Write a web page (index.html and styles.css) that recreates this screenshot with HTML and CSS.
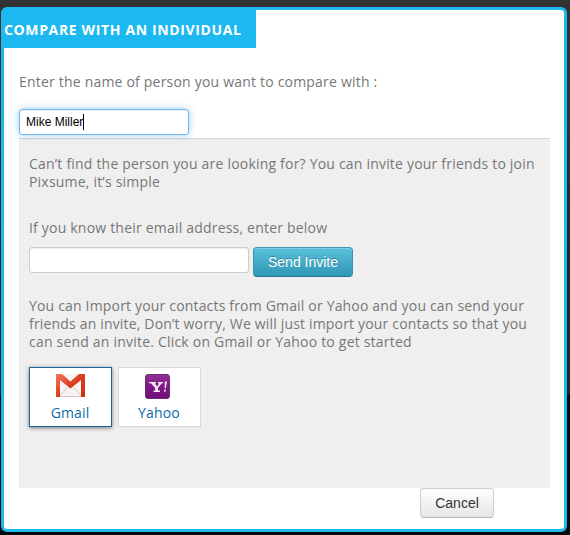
FILE: index.html
```html
<!DOCTYPE html>
<html lang="en">
<head>
<meta charset="utf-8">
<title>Compare with an individual</title>
<link rel="stylesheet" href="styles.css">
</head>
<body>
<main class="dialog">
  <h1 class="title">COMPARE WITH AN INDIVIDUAL</h1>
  <div class="body">
    <p class="prompt">Enter the name of person you want to compare with :</p>
    <div class="field field-name">Mike Miller<span class="caret"></span></div>
    <section class="panel">
      <p class="intro">Can’t find the person you are looking for? You can invite your friends to join<br>Pixsume, it’s simple</p>
      <p class="email-label">If you know their email address, enter below</p>
      <div class="invite">
        <input class="field field-email" type="text" aria-label="Email address">
        <button class="btn btn-info" type="button">Send Invite</button>
      </div>
      <p class="import">You can Import your contacts from Gmail or Yahoo and you can send your<br>friends an invite, Don’t worry, We will just import your contacts so that you<br><span class="import-end">can send an invite. Click on Gmail or Yahoo to get started</span></p>
      <div class="providers">
        <a class="provider active">
          <svg class="icon icon-gmail" width="30" height="26" viewBox="0 0 30 26">
            <defs><linearGradient id="red" x1="0" y1="0" x2="1" y2="1"><stop offset="0" stop-color="#f4775a"/><stop offset=".5" stop-color="#dc3c20"/><stop offset="1" stop-color="#d0300f"/></linearGradient></defs>
            <path d="M1 1H30V24H1z" fill="#f8f3f2"/>
            <path d="M5 22.500L12.500 14.500M26 22.500L18.500 14.500M5 23.500H26" fill="none" stroke="#cfc0bc" stroke-width=".9"/>
            <path d="M1 1H7L15.500 8.500L24 1H30V24H26V7L15.500 15.500L5 7V24H1z" fill="url(#red)"/>
          </svg>
          <span>Gmail</span>
        </a>
        <a class="provider">
          <svg class="icon" width="26" height="26" viewBox="0 0 26 26">
            <defs><linearGradient id="purple" x1="0" y1="0" x2="0" y2="1"><stop offset="0" stop-color="#943299"/><stop offset=".45" stop-color="#7f1b85"/><stop offset="1" stop-color="#720b77"/></linearGradient></defs>
            <rect x=".5" y="1.500" width="24" height="24" rx="2.500" fill="url(#purple)" stroke="#68306c"/>
            <path d="M4 9H11V10.300H9.800L12 13.500L14.300 10.500H13V9H18V10.300H16.700L13 15V17.600H15V19H8.500V17.600H10.200V15L6 10.300H4z" fill="#f6eaf7"/>
            <path d="M19.800 8.500H22L20.800 15.500H19.700zM19 16.800H20.800V18.600H19z" fill="#f6eaf7"/>
          </svg>
          <span>Yahoo</span>
        </a>
      </div>
    </section>
    <button class="btn btn-cancel" type="button">Cancel</button>
  </div>
</main>
</body>
</html>
```
FILE: styles.css
```css
* { box-sizing: border-box; }
html { height: 100%; background: linear-gradient(#333 0, #333 18%, #222 50%, #222 73.500%, #050809 74%, #050809 100%); }
body { margin: 0; height: 535px; padding: 7px 2px 3px 1px; overflow: hidden; font: 14px/18px "Open Sans", sans-serif; color: #777; }
p, h1 { margin: 0; white-space: nowrap; }
p { letter-spacing: .2px; }
.dialog { width: 566px; height: 525px; border: 3px solid #1cb8f0; border-radius: 6px; background: #fff; }
.title { width: 252px; height: 38px; background: #1cb8f0; color: #fff; font-size: 14px; line-height: 40px; font-weight: 700; letter-spacing: .64px; }
.body { display: flex; flex-direction: column; padding: 25px 14px 0 15px; }
.prompt { height: 18px; }
.field { border: 1px solid #ccc; border-radius: 3px; background: #fff; height: 26px; box-shadow: inset 0 1px 1px rgba(0,0,0,.075); }
.field-name { display: flex; align-items: center; width: 170px; margin-top: 18px; padding-left: 6px; border-color: #70b9ef; box-shadow: inset 0 1px 1px rgba(0,0,0,.075), 0 0 7px rgba(82,168,236,.6); color: #000; font: 12px/16px "Liberation Sans", sans-serif; z-index: 1; }
.caret { width: 1px; height: 16px; background: #000; }
.panel { height: 350px; margin-top: 3px; padding: 16px 10px 0; border-top: 1px solid #d3d3d3; background: #efefef; }
.email-label { margin-top: 28px; }
.invite { display: flex; align-items: flex-start; gap: 4px; margin-top: 10px; }
.field-email { width: 220px; padding: 0 6px; }
.btn { height: 30px; padding: 0; border-radius: 4px; font: 14px/18px "Liberation Sans", sans-serif; }
.btn-info { width: 100px; border: 1px solid #3b93ae; border-bottom-color: #267993; background: linear-gradient(#5bc0de, #2f96b4); color: #fff; text-shadow: 0 -1px 0 rgba(0,0,0,.25); box-shadow: inset 0 1px 0 rgba(255,255,255,.2); }
.import { margin-top: 20px; letter-spacing: .175px; }
.import-end { letter-spacing: .205px; }
.providers { display: flex; gap: 6px; margin-top: 16px; }
.provider { display: flex; flex-direction: column; align-items: center; width: 83px; height: 60px; padding-top: 5px; border: 1px solid #d8d8d8; background: #fff; color: #0b6ba5; }
.provider.active { border-color: #1b659d; box-shadow: 0 1px 4px rgba(0,0,0,.5); }
.provider span { margin: 5px 1px 0 0; letter-spacing: .15px; }
.icon { display: block; margin-right: 3px; }
.icon-gmail { margin-right: 1px; }
.btn-cancel { align-self: flex-end; width: 74px; margin-right: 56px; border: 1px solid #ccc; border-bottom-color: #b3b3b3; background: linear-gradient(#fff, #e6e6e6); color: #333; }
```
